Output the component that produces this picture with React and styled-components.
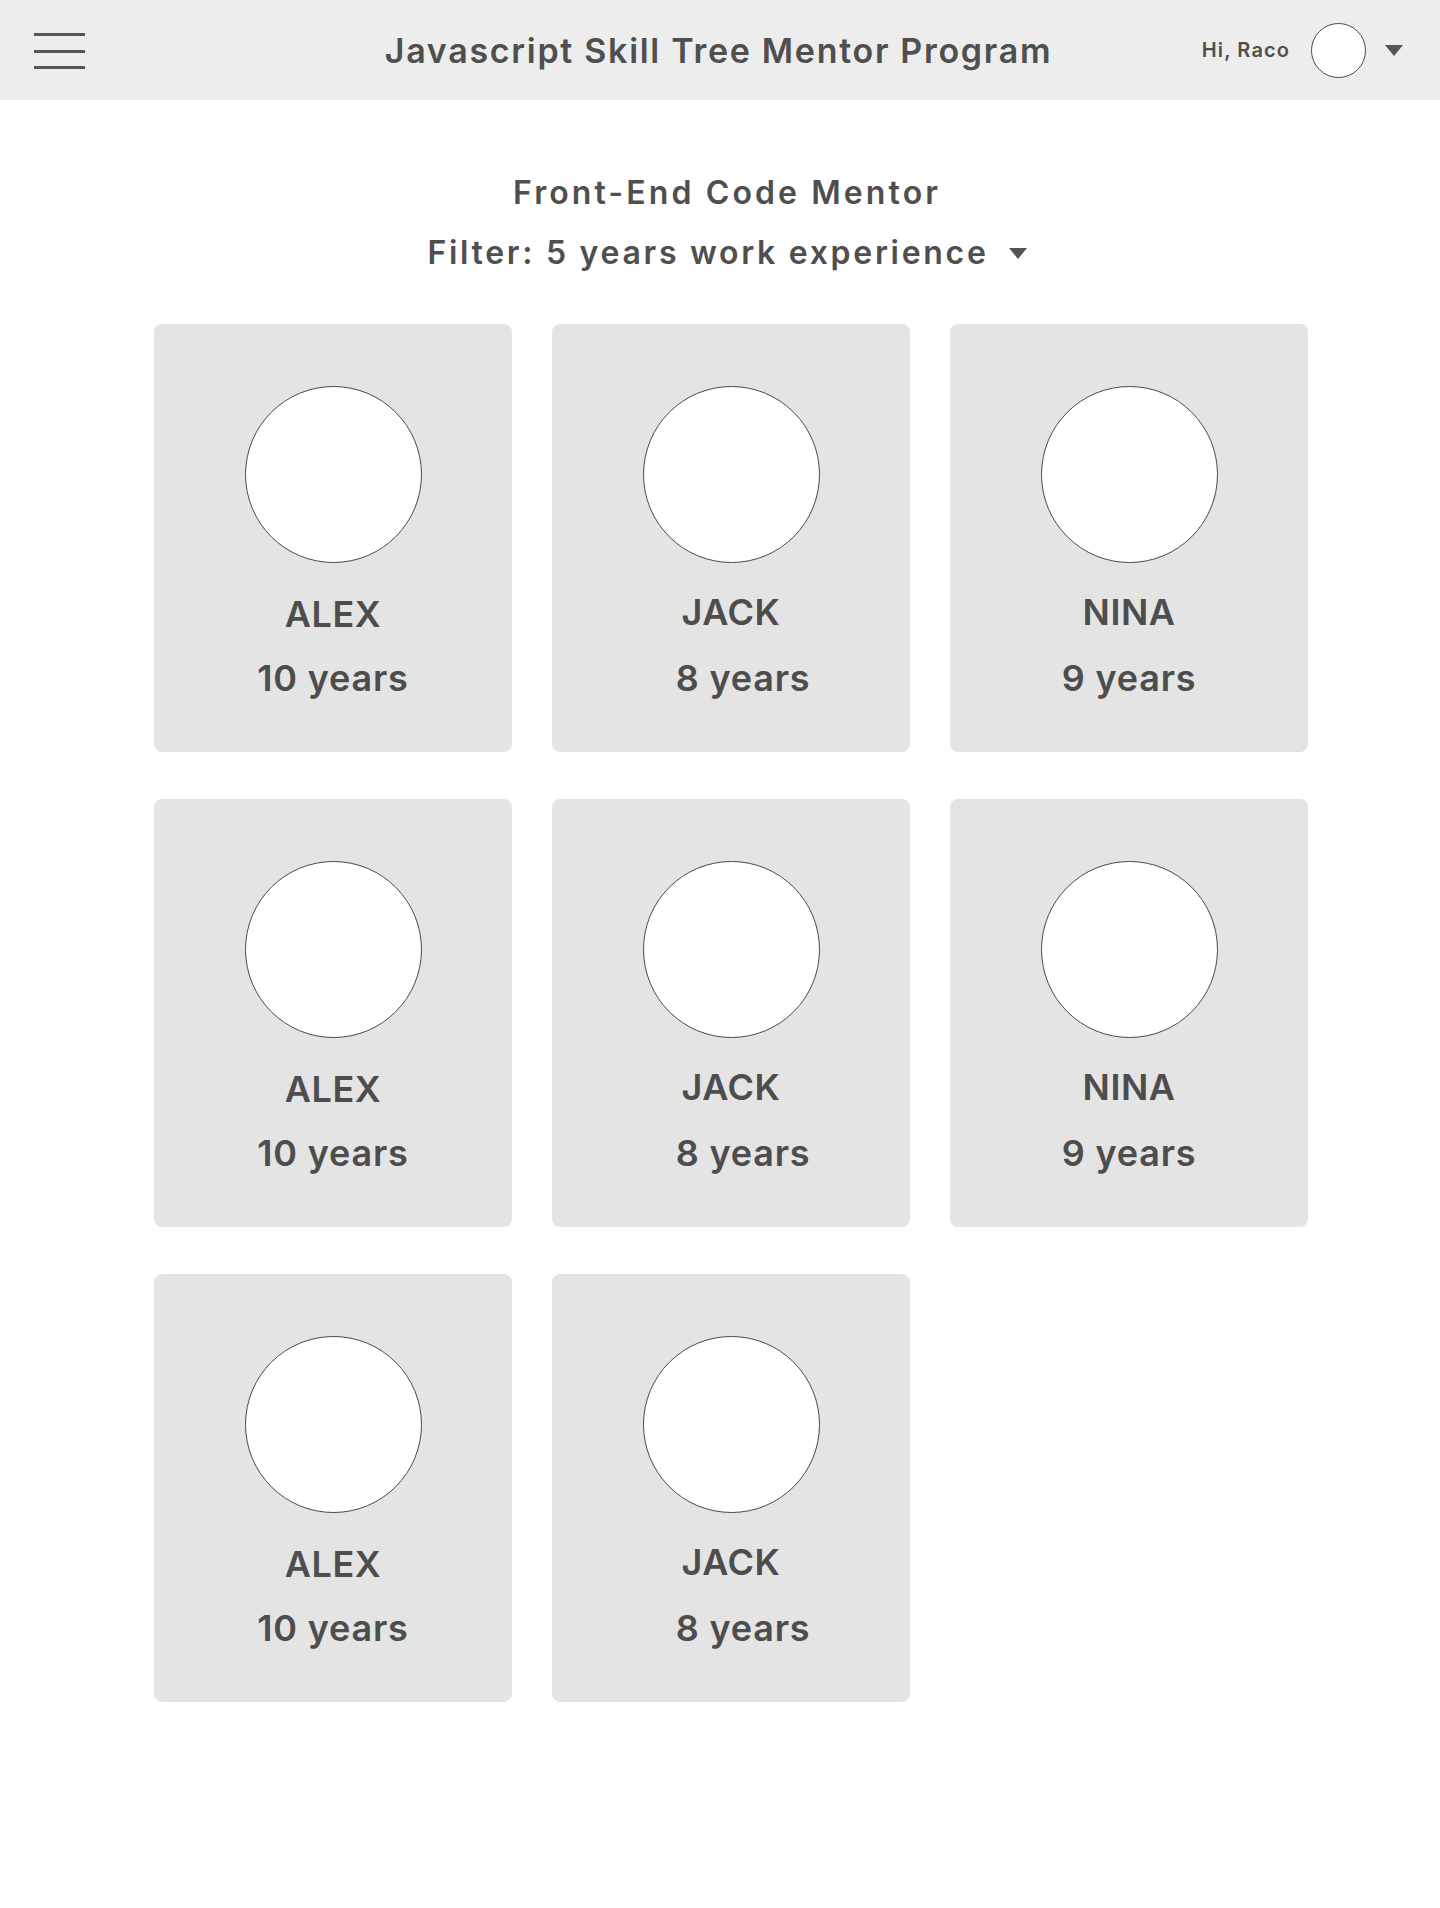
import React from "react";
import styled, { createGlobalStyle } from "styled-components";

const GlobalStyle = createGlobalStyle`
  html, body {
    margin: 0;
    padding: 0;
    background: #ffffff;
  }
  body {
    font-family: "Inter", "Noto Sans", sans-serif;
    color: #525252;
  }
  * {
    box-sizing: border-box;
  }
`;

const Page = styled.div`
  width: 1440px;
  min-height: 1908px;
  background: #ffffff;
`;

const Header = styled.header`
  height: 100px;
  background: #ededed;
  display: grid;
  grid-template-columns: 1fr auto 1fr;
  align-items: center;
  padding: 0 37px 0 34px;
`;

const MenuButton = styled.button`
  width: 51px;
  height: 36px;
  padding: 0;
  border: none;
  background: transparent;
  display: flex;
  flex-direction: column;
  justify-content: space-between;
  cursor: pointer;
  justify-self: start;
  margin-top: 2px;

  span {
    display: block;
    height: 3px;
    background: #555555;
  }
`;

const Title = styled.h1`
  margin: 0;
  font-size: 34px;
  font-weight: 600;
  color: #4f4f4f;
  letter-spacing: 1.7px;
`;

const UserArea = styled.div`
  justify-self: end;
  display: flex;
  align-items: center;
`;

const Greeting = styled.span`
  font-size: 20px;
  font-weight: 600;
  letter-spacing: 1.1px;
  color: #4f4f4f;
  margin-right: 21px;
`;

const Avatar = styled.div`
  width: ${(p) => p.size}px;
  height: ${(p) => p.size}px;
  border-radius: 50%;
  background: #ffffff;
  border: 1px solid #4a4a4a;
  flex-shrink: 0;
`;

const Caret = styled.svg`
  display: block;
  margin-left: ${(p) => p.gap}px;
  fill: #555555;
`;

const Intro = styled.section`
  display: flex;
  flex-direction: column;
  align-items: center;
  padding-top: 74px;
  padding-left: 14px;
`;

const Subtitle = styled.h2`
  margin: 0;
  font-size: 32px;
  font-weight: 600;
  letter-spacing: 3.1px;
  line-height: 37px;
  color: #4f4f4f;
`;

const FilterRow = styled.div`
  margin-top: 24px;
  display: flex;
  align-items: center;
  font-size: 32px;
  font-weight: 600;
  letter-spacing: 2.7px;
  line-height: 36px;
  color: #4f4f4f;
  cursor: pointer;
`;

const Grid = styled.div`
  display: grid;
  grid-template-columns: repeat(3, 358px);
  column-gap: 40px;
  row-gap: 47px;
  margin: 53px 0 0 154px;
`;

const Card = styled.div`
  height: 428px;
  background: #e4e4e4;
  border-radius: 8px;
  display: flex;
  flex-direction: column;
  align-items: center;
  padding-top: 62px;
`;

const Name = styled.div`
  margin-top: ${(p) => 29 - (p.lift || 0)}px;
  font-size: 36px;
  font-weight: 600;
  line-height: 44px;
  letter-spacing: 0.5px;
  color: #4d4d4d;
`;

const Years = styled.div`
  margin-top: ${(p) => 20 + (p.lift || 0)}px;
  padding-left: ${(p) => p.nudge || 0}px;
  font-size: 36px;
  font-weight: 600;
  line-height: 44px;
  letter-spacing: 0.8px;
  color: #4d4d4d;
`;

const mentors = [
  { name: "ALEX", years: 10 },
  { name: "JACK", years: 8, nudge: 24, lift: 2 },
  { name: "NINA", years: 9, lift: 2 },
  { name: "ALEX", years: 10 },
  { name: "JACK", years: 8, nudge: 24, lift: 2 },
  { name: "NINA", years: 9, lift: 2 },
  { name: "ALEX", years: 10 },
  { name: "JACK", years: 8, nudge: 24, lift: 2 },
];

const TriangleDown = ({ gap, w = 18, h = 11 }) => (
  <Caret gap={gap} width={w} height={h} viewBox="0 0 18 11">
    <polygon points="0,0 18,0 9,11" />
  </Caret>
);

const App = () => {
  return (
    <Page>
      <GlobalStyle />
      <Header>
        <MenuButton aria-label="menu">
          <span />
          <span />
          <span />
        </MenuButton>
        <Title>Javascript Skill Tree Mentor Program</Title>
        <UserArea>
          <Greeting>Hi, Raco</Greeting>
          <Avatar size={55} />
          <TriangleDown gap={19} />
        </UserArea>
      </Header>

      <Intro>
        <Subtitle>Front-End Code Mentor</Subtitle>
        <FilterRow>
          Filter: 5 years work experience
          <TriangleDown gap={20} />
        </FilterRow>
      </Intro>

      <Grid>
        {mentors.map((m, i) => (
          <Card key={i}>
            <Avatar size={177} />
            <Name lift={m.lift}>{m.name}</Name>
            <Years nudge={m.nudge} lift={m.lift}>
              {m.years} years
            </Years>
          </Card>
        ))}
      </Grid>
    </Page>
  );
};

export default App;
